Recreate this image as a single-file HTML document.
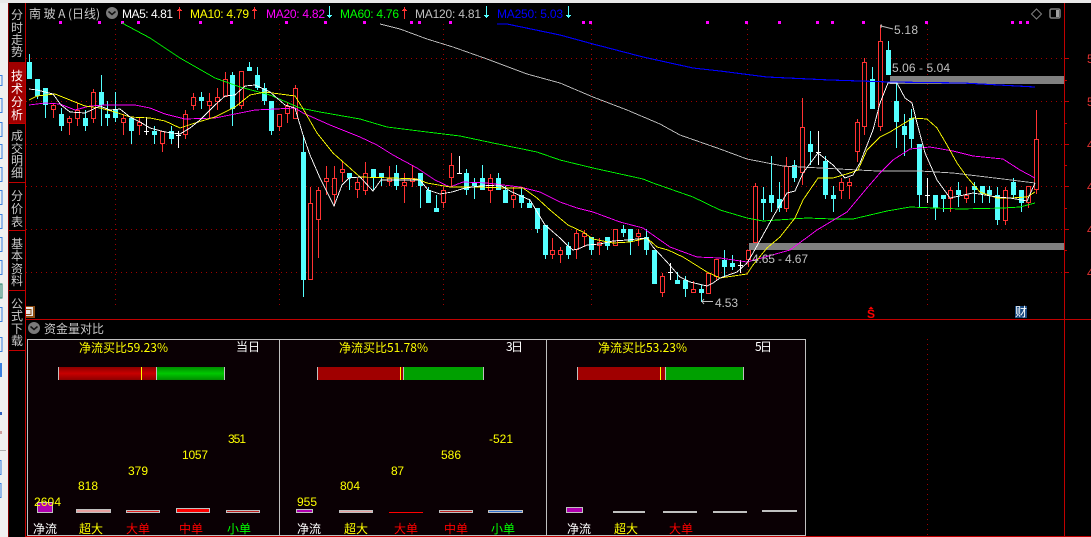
<!DOCTYPE html>
<html lang="zh"><head><meta charset="utf-8"><title>南玻A</title>
<style>
html,body{margin:0;padding:0;background:#000;width:1091px;height:537px;overflow:hidden}
svg{display:block;position:absolute;left:0;top:0}
text{font-family:"Liberation Sans","WenQuanYi Zen Hei","Noto Sans CJK SC",sans-serif;font-size:12px}
.c{font-family:"WenQuanYi Zen Hei","Noto Sans CJK SC",sans-serif;font-size:12px}
</style></head><body>
<svg width="1091" height="537" viewBox="0 0 1091 537" xmlns="http://www.w3.org/2000/svg">
<rect width="1091" height="537" fill="#000"/>
<!-- window edge -->
<rect x="0" y="0" width="8" height="537" fill="#f0f0f0"/>
<rect x="0" y="0" width="1091" height="3" fill="#e8e8e8"/>
<rect x="8" y="3" width="1" height="534" fill="#800000"/>
<g fill="none" stroke="#3a7fe0" shape-rendering="crispEdges">
<path d="M-1 75.500h3v10h-3M-1 98.500h3v14h-3M-1 122.500h3v14h-3M-1 144.500h3v14h-3M-1 167.500h3v14h-3M-1 190.500h3v14h-3M-1 214.500h3v14h-3M-1 237.500h3v14h-3M-1 260.500h3v14h-3M-1 307.500h3v14h-3M-1 337.500h3v14h-3M-1 460.500h2v14h-2M-1 483.500h2v14h-2"/>
</g>
<rect x="0" y="284" width="2" height="14" fill="none" stroke="#20806a"/>
<rect x="0" y="363" width="2" height="14" fill="#3a7fe0"/>
<rect x="0" y="412" width="2" height="3" fill="#3060c0"/>
<rect x="0" y="431" width="2" height="3" fill="#d0a0a0"/>
<rect x="0" y="450" width="6" height="1" fill="#b0b0b0"/>

<!-- left tabs -->
<rect x="9" y="62" width="16" height="61" fill="#a00000"/>
<g fill="#c00000" shape-rendering="crispEdges">
<rect x="25" y="3" width="1" height="534"/>
<rect x="9" y="182" width="16" height="1"/>
<rect x="9" y="230" width="16" height="1"/>
<rect x="9" y="290" width="16" height="1"/>
<rect x="9" y="350" width="16" height="1"/>
<rect x="9" y="123" width="16" height="1"/>
<rect x="25" y="319" width="1066" height="1"/>
<rect x="26" y="536" width="1065" height="1"/>
<rect x="1064" y="3" width="1" height="534"/>
</g>
<g class="c" text-anchor="middle" fill="#c8c8c8">
<text class="c" x="17" y="19">分</text><text class="c" x="17" y="32">时</text><text class="c" x="17" y="44">走</text><text class="c" x="17" y="56">势</text>
<text class="c" x="17" y="80" fill="#fff">技</text><text class="c" x="17" y="93" fill="#fff">术</text><text class="c" x="17" y="106" fill="#fff">分</text><text class="c" x="17" y="119" fill="#fff">析</text>
<text class="c" x="17" y="140">成</text><text class="c" x="17" y="153">交</text><text class="c" x="17" y="165">明</text><text class="c" x="17" y="177">细</text>
<text class="c" x="17" y="200">分</text><text class="c" x="17" y="213">价</text><text class="c" x="17" y="226">表</text>
<text class="c" x="17" y="248">基</text><text class="c" x="17" y="260">本</text><text class="c" x="17" y="273">资</text><text class="c" x="17" y="285">料</text>
<text class="c" x="17" y="308">公</text><text class="c" x="17" y="320">式</text><text class="c" x="17" y="333">下</text><text class="c" x="17" y="345">载</text>
</g>

<!-- grid -->
<g stroke="#a00000" stroke-dasharray="1 4" shape-rendering="crispEdges" fill="none">
<path d="M26 58.500H1064M26 101.500H1064M26 144.500H1064M26 186.500H1064M26 229.500H1064M26 272.500H1064"/>
<path d="M115.500 24V305M279.500 24V305M443.500 24V305M591.500 24V305M747.500 24V305M927.500 24V305M927.500 339V536"/>
</g>
<!-- axis ticks -->
<path d="M1064 58.500h5M1064 80.500h3M1064 101.500h5M1064 123.500h3M1064 144.500h5M1064 165.500h3M1064 186.500h5M1064 208.500h3M1064 229.500h5M1064 250.500h3M1064 272.500h5" stroke="#c00000" shape-rendering="crispEdges"/>
<g fill="#e03030" font-size="12">
<text x="1087" y="63">5</text><text x="1087" y="106">5</text><text x="1087" y="149">4</text><text x="1087" y="191">4</text><text x="1087" y="234">4</text><text x="1087" y="277">4</text>
</g>
<!-- markers -->
<path fill="#ff00ff" shape-rendering="crispEdges" d="M59 21h3v3h-3zM98 21h3v3h-3zM121 21h3v3h-3zM137 21h3v3h-3zM199 21h3v3h-3zM230 21h3v3h-3zM285 21h3v3h-3zM324 21h3v3h-3zM363 21h3v3h-3zM410 21h3v3h-3zM418 21h3v3h-3zM449 21h3v3h-3zM582 21h3v3h-3zM589 21h3v3h-3zM706 21h3v3h-3zM745 21h3v3h-3zM778 21h3v3h-3zM816 21h3v3h-3zM831 21h3v3h-3zM862 21h3v3h-3zM925 21h3v3h-3zM1011 21h3v3h-3zM1019 21h3v3h-3zM1026 21h3v3h-3z"/>
<!-- gap bands -->
<rect x="890" y="76" width="174" height="8" fill="#808080"/>
<rect x="749" y="243" width="315" height="7" fill="#808080"/>

<!-- candles: wicks -->
<g shape-rendering="crispEdges" fill="none">
<path stroke="#54ffff" d="M29.500 54V79M37.500 79V99M45.500 88V118M61.500 108V131M85.500 110V131M101.500 75V126M107.500 101V126M115.500 92V122M131.500 118V144M154.500 126V144M171.500 126V144M201.500 92V109M232.500 72V126M249.500 62V71M257.500 67V90M264.500 83V105M271.500 101V135M303.500 135V297M349.500 173V190M373.500 169V190M381.500 173V186M396.500 165V190M420.500 173V208M428.500 187V203M436.500 195V212M466.500 169V195M474.500 178V199M482.500 165V190M498.500 173V190M505.500 186V203M521.500 187V208M529.500 199V208M537.500 208V233M545.500 225V259M568.500 242V259M591.500 237V255M607.500 237V250M623.500 225V237M630.500 229V255M646.500 229V255M654.500 250V284M677.500 272V284M685.500 276V297M701.500 285V302M724.500 250V277M732.500 255V270M763.500 187V220M771.500 156V212M779.500 182V212M794.500 160V182M810.500 131V165M825.500 156V199M833.500 186V212M872.500 67V109M888.500 41V75M896.500 83V148M904.500 114V156M911.500 109V148M919.500 144V207M935.500 195V220M943.500 195V212M958.500 182V207M974.500 182V203M982.500 186V203M989.500 186V203M997.500 187V225M1013.500 178V198M1021.500 190V212"/>
<path stroke="#54ffff" stroke-width="5" d="M29.500 62V79M37.500 79V96M45.500 88V105M61.500 114V126M85.500 118V126M101.500 92V105M107.500 114V118M115.500 109V118M131.500 118V131M154.500 131V135M171.500 131V139M201.500 97V101M232.500 75V109M249.500 67V71M257.500 75V88M264.500 88V101M271.500 101V131M303.500 152V280M349.500 173V178M373.500 169V177M381.500 173V178M396.500 173V186M420.500 173V186M428.500 190V203M436.500 208V212M466.500 173V190M474.500 182V186M482.500 178V190M498.500 178V190M505.500 190V203M521.500 195V203M529.500 203V208M537.500 208V229M545.500 225V255M568.500 246V255M591.500 237V250M607.500 237V246M623.500 229V233M630.500 229V242M646.500 237V250M654.500 250V284M677.500 280V284M685.500 280V289M701.500 289V293M724.500 260V267M732.500 263V267M763.500 199V203M771.500 195V203M779.500 199V208M794.500 165V178M810.500 144V152M825.500 161V195M833.500 195V199M872.500 79V109M888.500 50V75M896.500 101V122M904.500 126V135M911.500 118V139M919.500 144V195M935.500 195V208M943.500 195V199M958.500 190V195M974.500 186V190M982.500 186V194M989.500 190V195M997.500 195V220M1013.500 182V195M1021.500 190V203"/>
<path stroke="#ff3232" d="M53.500 103V118M69.500 116V135M77.500 103V126M93.500 89V123M123.500 114V135M139.500 118V135M162.500 131V152M185.500 110V139M193.500 93V110M209.500 93V118M217.500 88V110M225.500 72V97M241.500 71V109M279.500 114V131M287.500 102V123M295.500 85V119M310.500 187V280M318.500 187V258M326.500 166V195M334.500 166V206M342.500 162V182M357.500 178V198M365.500 162V195M389.500 166V186M404.500 173V203M412.500 166V187M443.500 187V208M451.500 153V187M490.500 174V203M513.500 187V208M552.500 238V259M560.500 247V263M576.500 230V259M584.500 230V247M599.500 238V255M615.500 229V246M638.500 229V246M662.500 273V297M693.500 281V293M708.500 273V294M716.500 259V280M748.500 250V267M755.500 183V243M786.500 157V212M802.500 98V185M841.500 178V199M849.500 178V199M857.500 119V162M864.500 58V135M880.500 25V131M950.500 187V212M966.500 187V203M1005.500 187V225M1028.500 186V208M1036.500 110V194"/>
<path stroke="#ff3232" fill="#000" d="M51.500 105.500h4V109.500h-4zM67.500 118.500h4V122.500h-4zM75.500 110.500h4V118.500h-4zM91.500 92.500h4V118.500h-4zM121.500 118.500h4V122.500h-4zM137.500 122.500h4V125.500h-4zM160.500 131.500h4V143.500h-4zM183.500 114.500h4V134.500h-4zM191.500 97.500h4V105.500h-4zM207.500 101.500h4V105.500h-4zM215.500 97.500h4V101.500h-4zM223.500 79.500h4V96.500h-4zM239.500 71.500h4V105.500h-4zM277.500 114.500h4V126.500h-4zM285.500 106.500h4V113.500h-4zM293.500 88.500h4V118.500h-4zM308.500 203.500h4V279.500h-4zM316.500 190.500h4V219.500h-4zM324.500 178.500h4V181.500h-4zM332.500 178.500h4V194.500h-4zM340.500 169.500h4V172.500h-4zM355.500 182.500h4V189.500h-4zM363.500 173.500h4V190.500h-4zM387.500 178.500h4V181.500h-4zM402.500 182.500h4V185.500h-4zM410.500 178.500h4V181.500h-4zM441.500 190.500h4V202.500h-4zM449.500 165.500h4V177.500h-4zM488.500 178.500h4V190.500h-4zM511.500 195.500h4V199.500h-4zM550.500 250.500h4V254.500h-4zM558.500 250.500h4V254.500h-4zM574.500 233.500h4V249.500h-4zM582.500 233.500h4V236.500h-4zM597.500 242.500h4V245.500h-4zM613.500 229.500h4V245.500h-4zM636.500 233.500h4V236.500h-4zM660.500 276.500h4V292.500h-4zM691.500 289.500h4V292.500h-4zM706.500 273.500h4V293.500h-4zM714.500 259.500h4V276.500h-4zM746.500 250.500h4V259.500h-4zM753.500 186.500h4V242.500h-4zM784.500 166.500h4V208.500h-4zM800.500 127.500h4V172.500h-4zM839.500 182.500h4V190.500h-4zM847.500 182.500h4V185.500h-4zM855.500 122.500h4V151.500h-4zM862.500 62.500h4V126.500h-4zM878.500 41.500h4V126.500h-4zM948.500 190.500h4V198.500h-4zM964.500 195.500h4V198.500h-4zM1003.500 190.500h4V220.500h-4zM1026.500 186.500h4V202.500h-4zM1034.500 139.500h4V189.500h-4z"/>
<path stroke="#fff" d="M146.500 117V135M144 131.500h5M178.500 131V148M176 135.500h5M459.500 156V173M457 173.500h5M670.500 263V280M668 272.500h5M740.500 260V273M738 265.500h5M818.500 131V165M816 152.500h5M927.500 178V203M925 195.500h5"/>
</g>

<!-- moving averages -->
<g fill="none" shape-rendering="crispEdges" stroke-width="0.9">
<polyline stroke="#0000ff" stroke-width="1.100" points="497,24 507,24 560,35 593,44 643,57 693,68 720,71 767,77 830,80 890,82 963,83 1035,87"/>
<polyline stroke="#c0c0c0" points="380,24 400,29 427,39 453,47 487,59 527,74 560,83 593,97 627,110 660,124 680,135 720,149 747,159 783,166 820,168 877,171 920,171 953,173 1003,179 1035,183"/>
<polyline stroke="#00ff00" points="122,23 150,38 180,58 215,78 240,87 270,95 300,108 320,112 360,119 387,127 427,132 460,136 493,143 537,152 560,160 593,168 643,179 653,183 693,197 720,210 747,218 763,221 807,218 833,219 853,219 887,211 910,207 960,209 1003,208 1020,207 1035,203"/>
<polyline stroke="#ff00ff" points="29,105 45,103 60,104 75,110 90,106 105,105 135,105 150,108 165,114 185,119 215,118 235,114 255,110 275,109 295,108 303,113 330,125 360,137 377,145 393,155 417,168 435,180 450,187 463,182 487,183 520,187 540,192 560,202 577,208 593,212 620,222 643,228 670,247 697,257 720,258 747,262 790,250 817,230 847,212 867,188 880,173 893,160 910,149 930,147 953,151 973,156 1003,159 1020,170 1035,178"/>
<polyline stroke="#ffff00" points="29,100 37,96 55,94 70,100 85,106 100,108 115,112 130,117 150,118 165,121 180,128 195,123 215,117 235,107 250,95 265,92 295,96 302,107 317,133 333,153 360,177 393,178 417,179 427,183 450,187 477,187 507,188 523,188 537,198 550,210 568,225 583,232 593,239 613,243 630,242 647,238 657,247 668,250 683,257 707,272 720,278 747,274 753,265 767,248 780,237 795,218 803,200 818,178 833,178 850,173 858,170 867,150 880,137 890,132 903,124 913,118 927,119 937,128 947,145 957,163 967,177 980,192 997,198 1010,198 1027,197 1035,192"/>
<polyline stroke="#ffffff" points="29,89 37,90 53,94 61,105 70,112 85,113 100,106 110,110 120,109 130,117 140,122 150,128 165,132 180,134 190,128 200,120 215,105 225,96 235,95 245,86 255,85 270,92 285,105 295,108 303,135 310,155 320,178 334,206 342,185 349,178 360,177 373,191 381,180 400,180 420,180 428,190 440,194 452,192 465,188 480,186 500,185 512,192 530,200 545,225 560,238 567,245 573,250 578,249 587,245 600,244 613,241 627,240 647,238 653,247 667,262 680,277 690,282 707,286 713,283 720,278 737,272 747,263 753,253 763,235 773,217 780,205 787,193 795,191 803,173 818,153 833,165 845,178 853,175 860,163 873,130 880,103 888,83 897,83 905,98 912,103 917,123 925,153 937,180 950,198 973,193 997,197 1010,198 1027,201 1035,183"/>
</g>

<!-- header -->
<g fill="#c8c8c8">
<text class="c" x="29" y="18" textLength="71">南 玻 A (日线)</text>
</g>
<circle cx="112" cy="13" r="6" fill="#7a7a7a"/>
<path d="M108.500 11.500l3.500 3 3.500-3" stroke="#111" stroke-width="1.500" fill="none"/>
<text x="122" y="18" fill="#fff" textLength="51">MA5: 4.81</text>
<text x="190" y="18" fill="#ffff00" textLength="59">MA10: 4.79</text>
<text x="266" y="18" fill="#ff00ff" textLength="59">MA20: 4.82</text>
<text x="340" y="18" fill="#00ff00" textLength="59">MA60: 4.76</text>
<text x="415" y="18" fill="#c0c0c0" textLength="66">MA120: 4.81</text>
<text x="497" y="18" fill="#0000ff" textLength="66">MA250: 5.03</text>
<g shape-rendering="crispEdges" stroke-width="1">
<path d="M179.500 7V19M177 10.500h5M178 9.500h3" stroke="#ff3232"/>
<path d="M254.500 7V19M252 10.500h5M253 9.500h3" stroke="#ff3232"/>
<path d="M404.500 7V19M402 10.500h5M403 9.500h3" stroke="#ff3232"/>
<path d="M329.500 6V18M327 15.500h5M328 16.500h3" stroke="#54ffff"/>
<path d="M486.500 6V18M484 15.500h5M485 16.500h3" stroke="#54ffff"/>
<path d="M568.500 6V18M566 15.500h5M567 16.500h3" stroke="#54ffff"/>
</g>
<!-- top right icons -->
<path d="M1036.500 9l5 5-5 5-5-5z" fill="none" stroke="#808080"/>
<rect x="1050" y="9" width="10" height="9" rx="1.500" fill="none" stroke="#808080" stroke-width="1.500"/>
<rect x="1056" y="10" width="3" height="7" fill="#a0a0a0"/>

<!-- annotations -->
<g fill="#c0c0c0">
<text x="894" y="34" textLength="24">5.18</text>
<path d="M881 26l12 3M882 25h-1v3" stroke="#c0c0c0" fill="none"/>
<text x="892" y="72" textLength="58">5.06 - 5.04</text>
<text x="752" y="263" textLength="56">4.65 - 4.67</text>
<text x="715" y="307" textLength="23">4.53</text>
<path d="M702 301.500h11M704 299l-2 2.500 2 2.500" stroke="#c0c0c0" fill="none"/>
</g>
<!-- bottom markers -->
<rect x="26" y="306" width="9" height="12" fill="#8a4a10"/>
<rect x="26" y="307" width="7" height="9" fill="#e8e8e8"/>
<path d="M26 309.500h5v5h-5" stroke="#8a4a10" fill="none"/>
<path d="M871 306.500l2.500 2.500h-5z" fill="#ff0000"/>
<text x="871" y="318" fill="#ff0000" text-anchor="middle" font-weight="bold" font-size="11">S</text>
<rect x="1015" y="306" width="12" height="12" fill="#1a4a80"/>
<text class="c" x="1015" y="316" fill="#fff">财</text>

<!-- lower panel header -->
<circle cx="34" cy="328" r="6" fill="#7a7a7a"/>
<path d="M30.500 326.500l3.500 3 3.500-3" stroke="#111" stroke-width="1.500" fill="none"/>
<text class="c" x="44" y="333" fill="#c8c8c8" textLength="60">资金量对比</text>

<!-- lower panel -->
<rect x="27.500" y="339.500" width="778" height="196" fill="#0a0004" stroke="#c0c0c0"/>
<path d="M279.500 339V536M546.500 339V536" stroke="#c0c0c0" shape-rendering="crispEdges"/>

<defs>
<linearGradient id="r" x1="0" y1="0" x2="0" y2="1"><stop offset="0" stop-color="#8c0000"/><stop offset=".5" stop-color="#c80000"/><stop offset="1" stop-color="#8c0000"/></linearGradient>
<linearGradient id="g" x1="0" y1="0" x2="0" y2="1"><stop offset="0" stop-color="#008c00"/><stop offset=".5" stop-color="#00c800"/><stop offset="1" stop-color="#008c00"/></linearGradient>
</defs>

<!-- panel 1 -->
<text class="c" x="79" y="352" fill="#ffff00" textLength="89">净流买比59.23%</text>
<text class="c" x="236" y="351" fill="#fff">当日</text>
<rect x="58" y="367" width="98" height="13" fill="url(#r)"/>
<rect x="157" y="367" width="68" height="13" fill="url(#g)"/>
<g fill="#c0c0c0"><rect x="58" y="367" width="1" height="13"/><rect x="156" y="367" width="1" height="13"/><rect x="224" y="367" width="1" height="13"/></g>
<rect x="141" y="367" width="1" height="13" fill="#ffff00"/>
<g shape-rendering="crispEdges" stroke="#c0c0c0">
<rect x="37.500" y="502.500" width="15" height="10" fill="#b000b0"/>
<rect x="76.500" y="509.500" width="34" height="3" fill="#e8a0a0"/>
<rect x="126.500" y="510.500" width="33" height="2" fill="#e02020"/>
<rect x="176.500" y="508.500" width="33" height="4" fill="#ff0000"/>
<rect x="226.500" y="510.500" width="33" height="2" fill="#c02020"/>
</g>
<g fill="#ffff00">
<text x="34" y="506" textLength="27">2604</text>
<text x="78" y="490" textLength="20">818</text>
<text x="128" y="475" textLength="20">379</text>
<text x="182" y="459" textLength="26">1057</text>
<text x="228" y="443" textLength="18">351</text>
</g>
<text class="c" x="33" y="533" fill="#fff">净流</text>
<text class="c" x="79" y="533" fill="#ffff00">超大</text>
<text class="c" x="126" y="533" fill="#ff0000">大单</text>
<text class="c" x="179" y="533" fill="#ff0000">中单</text>
<text class="c" x="227" y="533" fill="#00ff00">小单</text>

<!-- panel 2 -->
<text class="c" x="339" y="352" fill="#ffff00" textLength="89">净流买比51.78%</text>
<text class="c" x="506" y="351" fill="#fff" textLength="17">3日</text>
<rect x="317" y="367" width="86" height="13" fill="#a00000"/>
<rect x="404" y="367" width="80" height="13" fill="#00a000"/>
<g fill="#c0c0c0"><rect x="317" y="367" width="1" height="13"/><rect x="403" y="367" width="1" height="13"/><rect x="483" y="367" width="1" height="13"/></g>
<rect x="400" y="367" width="1" height="13" fill="#ffff00"/>
<g shape-rendering="crispEdges" stroke="#c0c0c0">
<rect x="296.500" y="509.500" width="16" height="3" fill="#b000b0"/>
<rect x="339.500" y="510.500" width="33" height="2" fill="#e8a0a0"/>
<rect x="439.500" y="510.500" width="33" height="2" fill="#c02020"/>
<rect x="488.500" y="510.500" width="34" height="2" fill="#3070d0"/>
</g>
<rect x="389" y="512" width="34" height="1" fill="#ff0000"/>
<g fill="#ffff00">
<text x="297" y="506" textLength="20">955</text>
<text x="340" y="490" textLength="20">804</text>
<text x="391" y="475" textLength="13">87</text>
<text x="441" y="459" textLength="20">586</text>
<text x="489" y="443" textLength="24">-521</text>
</g>
<text class="c" x="297" y="533" fill="#fff">净流</text>
<text class="c" x="344" y="533" fill="#ffff00">超大</text>
<text class="c" x="394" y="533" fill="#ff0000">大单</text>
<text class="c" x="444" y="533" fill="#ff0000">中单</text>
<text class="c" x="491" y="533" fill="#00ff00">小单</text>

<!-- panel 3 -->
<text class="c" x="598" y="352" fill="#ffff00" textLength="89">净流买比53.23%</text>
<text class="c" x="755" y="351" fill="#fff" textLength="17">5日</text>
<rect x="577" y="367" width="88" height="13" fill="#a00000"/>
<rect x="666" y="367" width="78" height="13" fill="#00a000"/>
<g fill="#c0c0c0"><rect x="577" y="367" width="1" height="13"/><rect x="665" y="367" width="1" height="13"/><rect x="743" y="367" width="1" height="13"/></g>
<rect x="660" y="367" width="1" height="13" fill="#ffff00"/>
<rect x="566.500" y="507.500" width="16" height="5" fill="#b000b0" stroke="#c0c0c0" shape-rendering="crispEdges"/>
<g fill="#c0c0c0"><rect x="613" y="511" width="32" height="2"/><rect x="663" y="511" width="34" height="2"/><rect x="713" y="511" width="34" height="2"/><rect x="762" y="510" width="35" height="2"/></g>
<text class="c" x="567" y="533" fill="#fff">净流</text>
<text class="c" x="614" y="533" fill="#ffff00">超大</text>
<text class="c" x="669" y="533" fill="#ff0000">大单</text>
<rect x="27" y="536" width="1064" height="1" fill="#c00000"/>
</svg>
</body></html>
